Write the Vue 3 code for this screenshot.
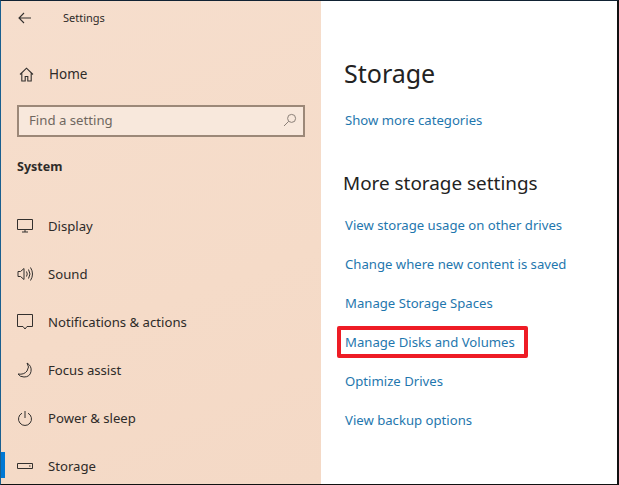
<script setup>
const nav = [
  { label: 'Display', icon: 'display' },
  { label: 'Sound', icon: 'sound' },
  { label: 'Notifications & actions', icon: 'notif' },
  { label: 'Focus assist', icon: 'moon' },
  { label: 'Power & sleep', icon: 'power' },
  { label: 'Storage', icon: 'storage', active: true },
]
const links = [
  { label: 'View storage usage on other drives' },
  { label: 'Change where new content is saved' },
  { label: 'Manage Storage Spaces' },
  { label: 'Manage Disks and Volumes', marked: true },
  { label: 'Optimize Drives' },
  { label: 'View backup options' },
]
</script>

<template>
  <div class="window">
    <aside class="side">
      <div class="titlebar">
        <svg class="back" width="14" height="12" viewBox="0 0 14 12" fill="none" stroke="#33302e" stroke-width="1.1"><path d="M13 6H1M6 1 1 6l5 5" /></svg>
        <span class="title">Settings</span>
      </div>
      <div class="home">
        <svg width="15" height="15" viewBox="0 0 15 15" fill="none" stroke="#33302e" stroke-width="1.1"><path d="M1 7.500 7.500 1.200 14 7.500M2.800 6v8h3.400V9.500h2.600V14h3.400V6" /></svg>
        <span>Home</span>
      </div>
      <div class="search">
        <span class="placeholder">Find a setting</span>
        <svg width="14" height="14" viewBox="0 0 14 14" fill="none" stroke="#8b8078" stroke-width="1"><circle cx="8.600" cy="5.400" r="4" /><path d="M5.700 8.300 1 13" /></svg>
      </div>
      <div class="group">System</div>
      <ul class="nav">
        <li v-for="item in nav" :key="item.label" class="nav-item">
          <i v-if="item.active" class="marker"></i>
          <span class="ico">
            <svg width="16" height="16" viewBox="0 0 16 16" fill="none" stroke="#33302e" stroke-width="1">
              <path v-if="item.icon === 'display'" d="M.5 1.500h15v10H.5zM8 11.500v2.500M5 14h6" />
              <path v-else-if="item.icon === 'sound'" d="M1 5.500h2.500L7 2.500v11l-3.500-3H1zM9.500 5.500q1.500 2.500 0 5M11.500 3.500q3 4.500 0 9M13.500 1.500q4 6.500 0 13" />
              <path v-else-if="item.icon === 'notif'" d="M.5 .5h15v12h-5.500L8 15l-2-2.500H.5z" />
              <path v-else-if="item.icon === 'moon'" d="M10 1q5 3 4 8.500T7 15Q3 15 1 12q6 1 9-3t0-8z" />
              <path v-else-if="item.icon === 'power'" d="M8 1v7M5 3.200a6.500 6.500 0 1 0 6 0" />
              <path v-else d="M.5 5.500h15v5H.5zM12 8h1.500" />
            </svg>
          </span>
          <span>{{ item.label }}</span>
        </li>
      </ul>
    </aside>
    <main class="content">
      <h1>Storage</h1>
      <a class="link more">Show more categories</a>
      <h2>More storage settings</h2>
      <div class="links">
        <div v-for="l in links" :key="l.label" class="row">
          <a class="link" :class="{ marked: l.marked }">{{ l.label }}</a>
        </div>
      </div>
    </main>
  </div>
</template>

<style>
html, body { margin: 0; padding: 0; background: #fff; }
</style>

<style scoped>
.window {
  width: 619px;
  height: 485px;
  box-sizing: border-box;
  display: flex;
  overflow: hidden;
  font-family: "Noto Sans", "Open Sans", sans-serif;
  background: #fff;
  border-top: 1px solid #123;
  border-left: 1px solid #1a5f8f;
  border-right: 2px solid #111;
  border-bottom: 1px solid #111;
}
.side {
  width: 320px;
  flex: none;
  background: linear-gradient(160deg, #f6decd 0%, #f5dbc8 60%, #f4d9c6 100%);
  color: #2e2b29;
  display: flex;
  flex-direction: column;
  overflow: hidden;
}
.side > * { flex: none; }
.titlebar {
  height: 33px;
  display: flex;
  align-items: center;
  gap: 31px;
  padding-left: 17px;
}
.title { font-size: 11px; }
.home {
  margin-top: 23px;
  height: 34px;
  display: flex;
  align-items: center;
  gap: 15px;
  padding-left: 18px;
  font-size: 13.5px;
}
.search {
  margin: 14px 16px 0 16px;
  height: 32px;
  box-sizing: border-box;
  border: 2px solid #9c8878;
  background: #f8e8dc;
  color: #6f675f;
  display: flex;
  align-items: center;
  justify-content: space-between;
  padding: 0 6px 2px 10px;
  font-size: 13.2px;
}
.group {
  margin: 20px 0 0 16px;
  font-weight: 700;
  font-size: 12.5px;
  line-height: 20px;
}
.nav {
  list-style: none;
  margin: 25px 0 0;
  padding: 0;
}
.nav-item {
  position: relative;
  height: 48px;
  display: flex;
  align-items: center;
  gap: 15px;
  padding-left: 16px;
  font-size: 13.15px;
}
.ico { display: flex; width: 16px; height: 16px; }
.marker {
  position: absolute;
  left: 0;
  top: 10px;
  width: 4px;
  height: 26px;
  background: #0078d4;
}
.content {
  flex: 1;
  padding-left: 22px;
  color: #222;
}
h1 {
  margin: 52px 0 0 1px;
  font-size: 25px;
  font-weight: 400;
  line-height: 40px;
}
.link {
  color: #1f77ae;
  font-size: 13.15px;
  line-height: 20px;
}
.more { display: block; margin: 17px 0 0 2px; }
h2 {
  margin: 40px 0 0;
  font-size: 18.9px;
  font-weight: 400;
  line-height: 26px;
}
.links { margin-top: 9px; }
.row { height: 39px; display: flex; align-items: center; }
.row .link { margin-left: 2px; }
.marked { position: relative; }
.marked::after {
  content: "";
  position: absolute;
  left: -8px;
  right: -13px;
  top: -6px;
  bottom: -6px;
  border: 4px solid #ee1c25;
  border-radius: 2px;
}
</style>
